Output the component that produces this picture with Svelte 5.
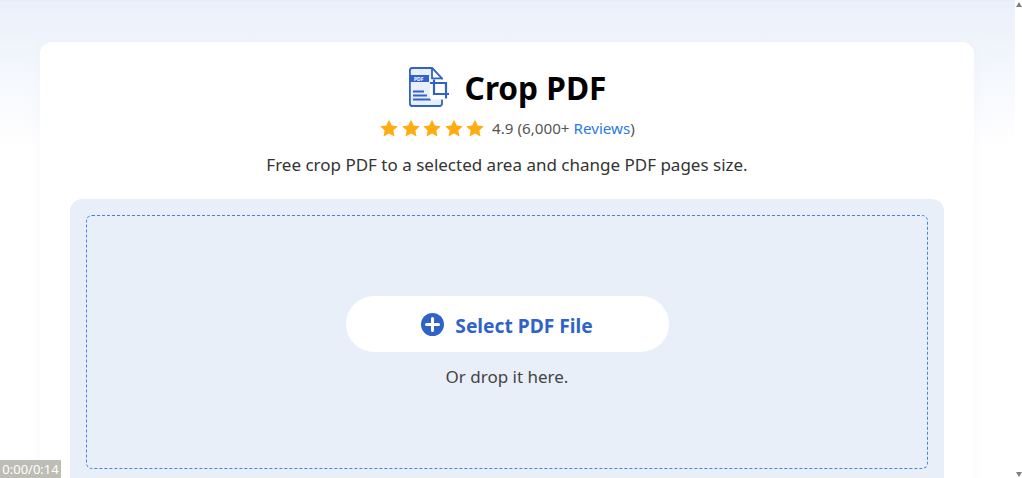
<script>
  const stars = [0, 1, 2, 3, 4];
</script>

<div class="frame">
  <main class="page">
    <section class="card">
      <header class="title-row">
        <svg class="doc" width="40" height="40" viewBox="0 0 40 40" fill="none">
          <path d="M3 1H23L33 11.5V36.5a2.5 2.5 0 0 1-2.5 2.500H3A2.500 2.500 0 0 1 .9 36.500V3.500A2.500 2.500 0 0 1 3 1Z" fill="#e9effa" stroke="#2f63c8" stroke-width="1.8"/>
          <path d="M23 1V11.5H33Z" fill="#fff" stroke="#2f63c8" stroke-width="1.8" stroke-linejoin="round"/>
          <rect x="1" y="8" width="19" height="7" fill="#2f63c8"/>
          <text x="5" y="13.7" class="pdf-mini">PDF</text>
          <path d="M4 24.5h11M4 28.5h14M4 32.5h18" stroke="#2f63c8" stroke-width="1.8"/>
          <rect x="21" y="12.5" width="19" height="20" fill="#fff"/>
          <path d="M25 12.5V27H40M21 16H37V31.500" stroke="#2f63c8" stroke-width="2.2"/>
        </svg>
        <h1>Crop PDF</h1>
      </header>

      <div class="rating">
        <span class="stars">
          {#each stars as s (s)}
            <svg width="18" height="18" viewBox="0 0 20 19"><path d="M10 .3l3 6.3 6.8.9-5 4.7 1.3 6.700L10 15.600l-6.100 3.300 1.300-6.700-5-4.700 6.800-.9Z" fill="#ffab12"/></svg>
          {/each}
        </span>
        <span class="score">4.9 (6,000+ <span class="link">Reviews</span>)</span>
      </div>

      <p class="desc">Free crop PDF to a selected area and change PDF pages size.</p>

      <div class="drop-outer">
        <div class="drop-inner">
          <button class="select" type="button">
            <svg width="23" height="23" viewBox="0 0 23 23">
              <circle cx="11.5" cy="11.5" r="11.5" fill="#2f63c8"/>
              <path d="M11.5 5.5v12M5.5 11.5h12" stroke="#fff" stroke-width="3" stroke-linecap="round"/>
            </svg>
            <span>Select PDF File</span>
          </button>
          <p class="hint">Or drop it here.</p>
        </div>
      </div>
    </section>
  </main>

  <aside class="scrollbar">
    <span class="arrow up"></span>
    <span class="arrow down"></span>
  </aside>
  <div class="timer">0:00/0:14</div>
</div>

<style>
  :global(body) {
    margin: 0;
    overflow: hidden;
    background: #fff;
  }
  .frame {
    position: relative;
    display: flex;
    width: 1022px;
    height: 478px;
    overflow: hidden;
    font-family: "Noto Sans", "Open Sans", sans-serif;
  }
  .page {
    box-sizing: border-box;
    width: 1015px;
    height: 478px;
    padding: 42px 41px 0 40px;
    background: linear-gradient(180deg, #eaf0fa 0, #fff 145px);
    border-top: 1px solid #e8ecf3;
    overflow: hidden;
  }
  .card {
    box-sizing: border-box;
    height: 500px;
    margin-top: -1px;
    padding: 25px 30px 0;
    background: #fff;
    border-radius: 12px;
    box-shadow: 0 0 12px rgba(230, 236, 248, 0.35);
  }
  .title-row {
    display: flex;
    justify-content: center;
    align-items: center;
    gap: 16px;
    height: 42px;
    margin-left: 1px;
  }
  .doc { flex: none; margin-top: -2px; }
  .pdf-mini {
    font: 700 5px "Noto Sans", sans-serif;
    fill: #fff;
  }
  h1 {
    margin: 0;
    color: #000;
    font-size: 31.6px;
    line-height: 42px;
    font-weight: 700;
  }
  .rating {
    display: flex;
    justify-content: center;
    align-items: center;
    gap: 8px;
    height: 26px;
    margin-top: 6px;
    margin-left: 1px;
  }
  .stars { display: flex; gap: 3.5px; }
  .stars svg { display: block; }
  .score {
    color: #555;
    font-size: 15.2px;
  }
  .link { color: #2a7ae4; }
  .desc {
    margin: 12px 0 0;
    height: 24px;
    color: #333;
    font-size: 17px;
    line-height: 24px;
    text-align: center;
  }
  .drop-outer {
    box-sizing: border-box;
    margin-top: 22px;
    padding: 16px;
    height: 300px;
    background: #e9eff9;
    border-radius: 12px;
  }
  .drop-inner {
    box-sizing: border-box;
    display: flex;
    flex-direction: column;
    align-items: center;
    height: 254px;
    padding-top: 80px;
    border: 1px dashed #3e86ea;
    border-radius: 6px;
  }
  .select {
    display: flex;
    justify-content: center;
    align-items: center;
    gap: 11px;
    width: 323px;
    height: 56px;
    padding: 2px 0 0;
    border: 0;
    border-radius: 28px;
    background: #fff;
    color: #2f63c8;
    font-family: inherit;
    font-size: 19.2px;
    font-weight: 700;
  }
  .select svg { margin-top: -1px; }
  .hint {
    margin: 13px 0 0;
    color: #444;
    font-size: 17px;
    line-height: 24px;
  }
  .scrollbar {
    flex: none;
    position: relative;
    width: 7px;
    background: #fff;
  }
  .arrow {
    position: absolute;
    left: 1px;
    width: 0;
    height: 0;
    border-left: 3.5px solid transparent;
    border-right: 3.5px solid transparent;
  }
  .up { top: 2px; border-bottom: 5px solid #808080; }
  .down { bottom: 1px; border-top: 5px solid #808080; }
  .timer {
    position: absolute;
    left: 0;
    bottom: 0;
    width: 61px;
    height: 18px;
    background: #bdbdb5;
    color: #fff;
    font-size: 13px;
    line-height: 18px;
    text-align: center;
  }
</style>
